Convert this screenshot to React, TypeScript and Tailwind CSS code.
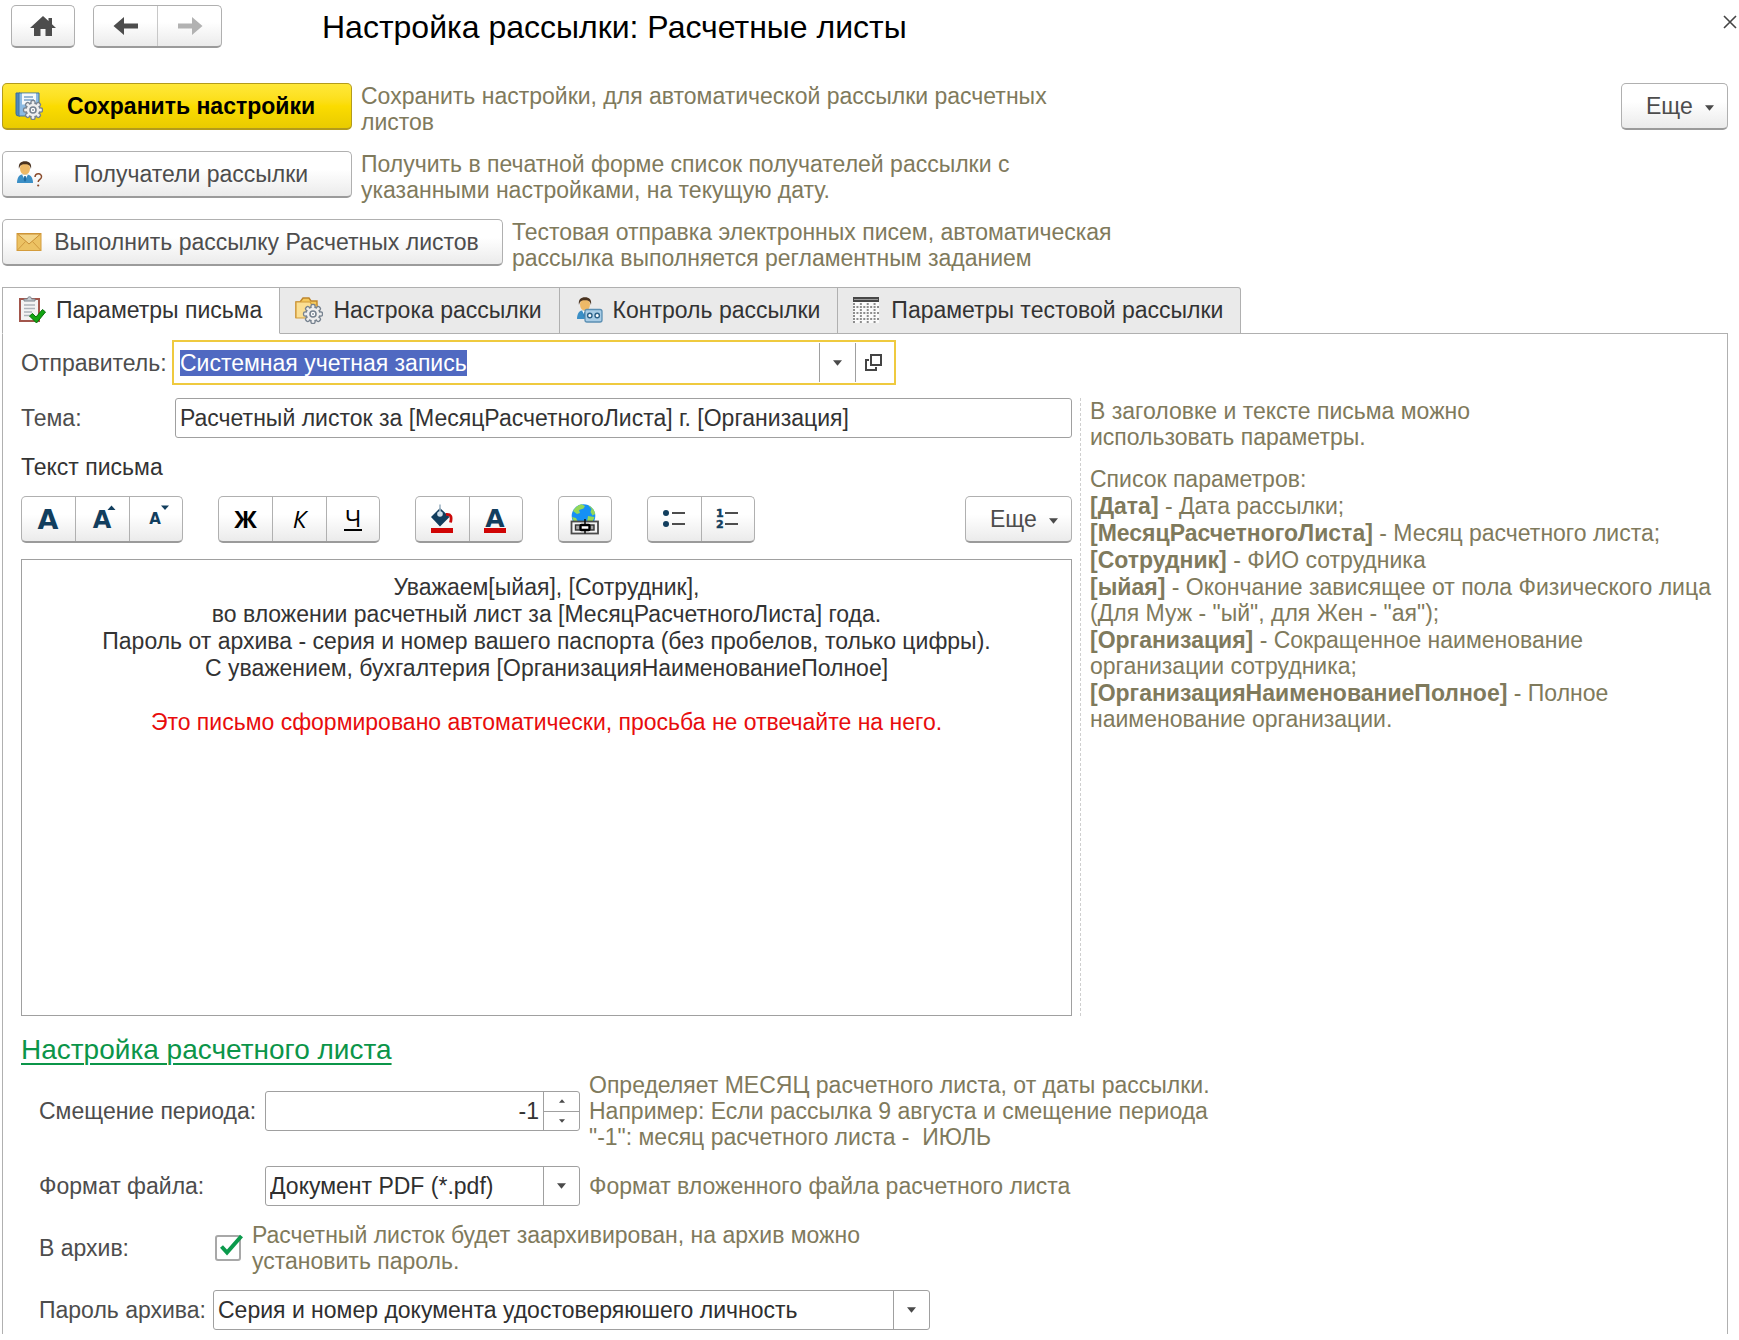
import { useEffect, useRef, useState, type ReactNode } from 'react';

const BTN = 'border border-[#b0b0b0] border-b-2 border-b-[#9b9b9b] bg-linear-to-b from-white from-40% to-[#ebebeb]';
const HINT = 'leading-[26px] text-[#7f7a5c] whitespace-nowrap';
const LABEL = 'shrink-0 text-[#4d4d4d] leading-[26px] whitespace-nowrap';
const FIELD = 'flex h-10 items-stretch rounded-[3px] border border-[#a0a0a0] bg-white';

const TEETH = [0, 45, 90, 135, 180, 225, 270, 315];

function Gear({ cx, cy }: { cx: number; cy: number }) {
  return (
    <g transform={`translate(${cx} ${cy})`}>
      <g fill="#eeeeee" stroke="#76828f" strokeWidth="1.5">
        {TEETH.map((a) => (
          <rect key={a} x="-2" y="-9.4" width="4" height="5" rx="1.6" transform={`rotate(${a})`} />
        ))}
        <circle r="7" />
      </g>
      {TEETH.map((a) => (
        <rect key={a} x="-1.3" y="-8.4" width="2.6" height="4" fill="#eeeeee" transform={`rotate(${a})`} />
      ))}
      <circle r="3" fill="#fff" stroke="#76828f" strokeWidth="1.6" />
      <circle r="1" fill="#8e99a5" />
    </g>
  );
}

function SaveIcon() {
  return (
    <svg width="28" height="28" viewBox="0 0 28 28" aria-hidden="true">
      <path d="M1 1h4v23H3.5A2.500 2.500 0 0 1 1 21.500z" fill="#4f88bd" stroke="#3a6c9c" />
      <path d="M4 1h20v23H4z" fill="#8cbbe2" stroke="#43759f" />
      <path d="M7 1.500h14v11H7z" fill="#f4f8fb" />
      <path d="M9 5h9M9 8h10" stroke="#7aa3c8" strokeWidth="1.400" />
      <Gear cx={18} cy={18} />
    </svg>
  );
}

function Person() {
  return (
    <>
      <path d="M1 22c0-5 2-8 5-8.500h5c4 .5 6 3.500 6 8.500z" fill="#3b8fc6" />
      <path d="M6 13.500l3 5.500 3-5.500z" fill="#fff" />
      <path d="M8.300 15h1.400l.6 4-1.300 2-1.300-2z" fill="#1f6a9f" />
      <ellipse cx="9" cy="7.500" rx="5" ry="6.200" fill="#edb967" />
      <path d="M3 8C2 2.500 5 .3 9 .3s7 2.200 6 7.700c-.7-3-1.500-4.800-6-4.800S3.700 5 3 8z" fill="#4a3320" />
    </>
  );
}

function RecipientsIcon() {
  return (
    <svg width="28" height="28" viewBox="0 0 28 28" aria-hidden="true">
      <g transform="translate(1 1)">
        <Person />
      </g>
      <path d="M20 17c.3-4.500 7-4 6.500 0-.2 2.400-3.300 2.500-3.300 5" fill="none" stroke="#8a4b2c" strokeWidth="1.500" />
      <circle cx="23.200" cy="25.500" r="1.100" fill="#8a4b2c" />
    </svg>
  );
}

function MailIcon() {
  return (
    <svg width="28" height="20" viewBox="0 0 28 20" aria-hidden="true">
      <rect x="2" y="1.500" width="24" height="17" fill="#ecc263" stroke="#d49c3c" />
      <path d="M2.500 2l11.500 10L25.500 2z" fill="#f3d58a" stroke="#c98f35" />
      <path d="M2.500 18l8-8.500M25.500 18l-8-8.500" stroke="#d09a40" />
    </svg>
  );
}

function ClipboardIcon() {
  return (
    <svg width="28" height="28" viewBox="0 0 28 28" aria-hidden="true">
      <rect x="2" y="3" width="19" height="22" fill="#f3f3f3" stroke="#a2564c" strokeWidth="2" />
      <path d="M6 5V3h3.500C9.500 1.500 10.500.8 11.500.8s2 .7 2 2.200H17v2z" fill="#c6ccd2" stroke="#7c858d" />
      <path d="M6 9h11M6 12.500h11M6 16h8M6 19.500h6" stroke="#aeb4ba" strokeWidth="1.400" />
      <path d="M11.500 20l3-2.500 3.500 3.500 6.500-7.500 3 2.500-9 11z" fill="#12a512" stroke="#0a6d0d" />
    </svg>
  );
}

function FolderIcon() {
  return (
    <svg width="28" height="28" viewBox="0 0 28 28" aria-hidden="true">
      <path d="M1 22V6h4l3-4h6l2 3h6v8" fill="#f4c95d" stroke="#bf862c" strokeWidth="1.400" />
      <path d="M1 22V6h14l2 3h5v6l-10 7z" fill="#fbdf93" stroke="#d29c3a" strokeWidth="1.200" />
      <Gear cx={18} cy={18} />
    </svg>
  );
}

function ControlIcon() {
  return (
    <svg width="28" height="28" viewBox="0 0 28 28" aria-hidden="true">
      <g transform="translate(1 1)">
        <Person />
      </g>
      <rect x="10" y="13.500" width="17" height="12.500" rx="2" fill="#a9cde6" stroke="#5b8fb3" strokeWidth="1.300" />
      <circle cx="14.800" cy="19.500" r="2.200" fill="#fff" stroke="#2d6288" strokeWidth="1.400" />
      <circle cx="22.200" cy="19.500" r="2.200" fill="#fff" stroke="#2d6288" strokeWidth="1.400" />
    </svg>
  );
}

const GRID_ROWS = [8, 11, 14, 17, 20, 23, 26];

function GridIcon() {
  return (
    <svg width="28" height="28" viewBox="0 0 28 28" aria-hidden="true">
      <rect x="0" y="6" width="26" height="21" fill="#fafafa" />
      <rect x="0" y="1" width="26" height="5" fill="#474747" />
      <path d="M1 3.500h24" stroke="#9b9b9b" />
      {GRID_ROWS.map((y, i) => (
        <path
          key={y}
          d={`M0 ${y}h26`}
          stroke="#6a6a6a"
          strokeWidth="1.5"
          strokeDasharray={i % 2 ? '2 1.43' : '2 4.86'}
        />
      ))}
    </svg>
  );
}

function HomeIcon() {
  return (
    <svg width="26" height="22" viewBox="0 0 26 22" aria-hidden="true">
      <path d="M13 1L0 13h4v8h6.500v-7h5v7H22v-8h4l-4-3.800V3h-3.500v3z" fill="#4d4d4d" />
    </svg>
  );
}

function ArrowIcon({ right }: { right?: boolean }) {
  return (
    <svg width="26" height="18" viewBox="0 0 26 18" aria-hidden="true">
      {right ? (
        <path d="M25.500 9L15 0v6.600H1v4.800h14V18z" fill="#b2b2b2" />
      ) : (
        <path d="M.5 9L11 0v6.600h14v4.800H11V18z" fill="#4d4d4d" />
      )}
    </svg>
  );
}

function Caret({ up, small }: { up?: boolean; small?: boolean }) {
  return (
    <svg width={small ? 6 : 9} height={small ? 4 : 6} viewBox="0 0 10 6" aria-hidden="true">
      <path d={up ? 'M0 6h10L5 0z' : 'M0 0h10L5 6z'} fill="#4a4a4a" />
    </svg>
  );
}

function Letter({ size, y, children }: { size: number; y: number; children: ReactNode }) {
  return (
    <text x="14" y={y} fontSize={size} fontWeight="bold" textAnchor="middle" fill="#123e5e" fontFamily="DejaVu Sans, sans-serif">
      {children}
    </text>
  );
}

function Glyph({ children }: { children: ReactNode }) {
  return (
    <svg width="30" height="32" viewBox="0 0 30 32" className="overflow-visible">
      {children}
    </svg>
  );
}

function GlobeLink() {
  return (
    <Glyph>
      <circle cx="13.500" cy="13" r="11.800" fill="#1590f5" />
      <path
        d="M3 8c2-3.500 5-6 8.500-6.700L15 3l-1.500 2.500L9 7l1 3-3 1zM18 2c4 2 6.500 5 7.200 9l-2.700 1.500-2-3.500 1-3zM2 14l4 1 2 4H4zM18 13l6.500 1-2 5H17z"
        fill="#93d857"
      />
      <rect x="1.500" y="18.500" width="26.500" height="12" fill="#f4f4f4" stroke="#4b4b4b" strokeWidth="1.800" />
      <rect x="5.500" y="22" width="18.500" height="5" fill="#a5a5a5" stroke="#333" strokeWidth="1.400" />
      <rect x="10.500" y="22" width="9" height="5" rx="1" fill="#fff" stroke="#000" strokeWidth="2.400" />
      <path d="M15 16v5M15 28v2.500" stroke="#111" strokeWidth="1.600" />
    </Glyph>
  );
}

const TOOL_GROUPS: { label: string; icon: ReactNode }[][] = [
  [
    { label: 'Шрифт', icon: <Glyph><Letter size={27} y={26}>A</Letter></Glyph> },
    {
      label: 'Увеличить шрифт',
      icon: (
        <Glyph>
          <Letter size={24} y={25}>A</Letter>
          <path d="M19.500 7h8l-4-4.500z" fill="#123e5e" />
        </Glyph>
      ),
    },
    {
      label: 'Уменьшить шрифт',
      icon: (
        <Glyph>
          <Letter size={15} y={21}>A</Letter>
          <path d="M20 2.500h8L24 7z" fill="#123e5e" />
        </Glyph>
      ),
    },
  ],
  [
    { label: 'Полужирный', icon: <span className="font-['Open_Sans',sans-serif] text-2xl font-bold text-black">Ж</span> },
    { label: 'Курсив', icon: <span className="font-['Open_Sans',sans-serif] text-2xl italic text-black">К</span> },
    {
      label: 'Подчеркнутый',
      icon: <span className="border-b-2 border-black px-px font-['Open_Sans',sans-serif] text-2xl leading-[22px] text-black">Ч</span>,
    },
  ],
  [
    {
      label: 'Цвет фона',
      icon: (
        <Glyph>
          <path d="M12 5l9.500 9L12 23.500 3 14z" fill="#123e5e" />
          <path d="M12 1.500v8" stroke="#9fb4c4" strokeWidth="1.600" />
          <circle cx="12" cy="11" r="2.800" fill="#cfe0ec" />
          <path d="M18 11.500c5-.5 6 2 4.500 8" fill="none" stroke="#cc0a0a" strokeWidth="2.800" />
          <rect x="3" y="25" width="22" height="5" fill="#d00505" />
        </Glyph>
      ),
    },
    {
      label: 'Цвет текста',
      icon: (
        <Glyph>
          <Letter size={25} y={24}>A</Letter>
          <rect x="3" y="25" width="22" height="5" fill="#d00505" />
        </Glyph>
      ),
    },
  ],
  [{ label: 'Вставить ссылку', icon: <GlobeLink /> }],
  [
    {
      label: 'Маркированный список',
      icon: (
        <Glyph>
          <circle cx="6" cy="10" r="3" fill="#123e5e" />
          <circle cx="6" cy="21" r="3" fill="#123e5e" />
          <path d="M12 10h13M12 21h13" stroke="#4d4d4d" strokeWidth="2" />
        </Glyph>
      ),
    },
    {
      label: 'Нумерованный список',
      icon: (
        <Glyph>
          <g fill="#123e5e" stroke="#123e5e" strokeWidth="0.5" fontSize="11" fontWeight="bold" fontFamily="DejaVu Sans, sans-serif">
            <text x="3" y="14">1</text>
            <text x="3" y="25">2</text>
          </g>
          <path d="M12 10h13M12 21h13" stroke="#4d4d4d" strokeWidth="2" />
        </Glyph>
      ),
    },
  ],
];

const TABS = [
  { title: 'Параметры письма', icon: <ClipboardIcon /> },
  { title: 'Настрока рассылки', icon: <FolderIcon /> },
  { title: 'Контроль рассылки', icon: <ControlIcon /> },
  { title: 'Параметры тестовой рассылки', icon: <GridIcon /> },
];

function MoreButton() {
  return (
    <button className={`flex h-[47px] w-[107px] shrink-0 items-center gap-3 rounded-[5px] pl-6 text-[#4d4d4d] ${BTN}`}>
      Еще
      <span className="pt-1">
        <Caret />
      </span>
    </button>
  );
}

function ActionButton({ icon, width, primary, children }: { icon: ReactNode; width: string; primary?: boolean; children: ReactNode }) {
  const look = primary
    ? 'border border-b-2 border-[#b39b1c] bg-linear-to-b from-[#ffe838] via-[#fbdc00] to-[#e9cb00] font-bold text-black'
    : `text-[#4d4d4d] ${BTN}`;
  return (
    <button className={`flex h-[47px] shrink-0 items-center gap-2 rounded-[5px] pr-5 pl-3 whitespace-nowrap ${width} ${look}`}>
      {icon}
      <span className="flex-1 text-center">{children}</span>
    </button>
  );
}

function SelectField({ id, value, width }: { id: string; value: string; width: string }) {
  return (
    <div className={`relative ${FIELD} ${width}`}>
      <select id={id} className="w-full appearance-none bg-transparent pr-9 pl-1 text-[#2f2f2f] outline-none">
        <option>{value}</option>
      </select>
      <span className="pointer-events-none absolute inset-y-0 right-0 flex w-9 items-center justify-center border-l border-[#a0a0a0]">
        <Caret />
      </span>
    </div>
  );
}

export default function App() {
  const [tab, setTab] = useState(0);
  const [offset, setOffset] = useState(-1);
  const [archive, setArchive] = useState(true);
  const senderRef = useRef<HTMLInputElement>(null);

  useEffect(() => {
    senderRef.current?.focus();
    senderRef.current?.select();
  }, []);

  return (
    <div className="min-h-screen bg-white pb-2 font-['Liberation_Sans',Arial,sans-serif] text-[23px] leading-[26px] text-[#333]">
      <header className="flex items-start pt-[5px] pb-[33px] pl-[11px]">
        <button aria-label="Домой" className={`flex h-[43px] w-16 items-center justify-center rounded-[5px] ${BTN}`}>
          <HomeIcon />
        </button>
        <div className={`ml-[18px] flex h-[43px] w-[129px] rounded-[5px] ${BTN}`}>
          <button aria-label="Назад" className="flex flex-1 items-center justify-center border-r border-[#c8c8c8]">
            <ArrowIcon />
          </button>
          <button aria-label="Вперед" className="flex flex-1 items-center justify-center">
            <ArrowIcon right />
          </button>
        </div>
        <h1 className="ml-[100px] flex-1 text-[32px] leading-[45px] text-black">Настройка рассылки: Расчетные листы</h1>
        <button aria-label="Закрыть" className="mt-2 p-0.5">
          <svg width="14" height="14" viewBox="0 0 14 14" aria-hidden="true">
            <path d="M1 1l12 12M13 1L1 13" stroke="#444" strokeWidth="1.600" />
          </svg>
        </button>
      </header>

      <main className="pr-[11px] pl-0.5">
        <div className="flex flex-col gap-4">
          <div className="flex gap-[9px]">
            <ActionButton icon={<SaveIcon />} width="w-[350px]" primary>Сохранить настройки</ActionButton>
            <p className={`flex-1 ${HINT}`}>
              Сохранить настройки, для автоматической рассылки расчетных
              <br />
              листов
            </p>
            <MoreButton />
          </div>
          <div className="flex gap-[9px]">
            <ActionButton icon={<RecipientsIcon />} width="w-[350px]">Получатели рассылки</ActionButton>
            <p className={HINT}>
              Получить в печатной форме список получателей рассылки с
              <br />
              указанными настройками, на текущую дату.
            </p>
          </div>
          <div className="flex gap-[9px]">
            <ActionButton icon={<MailIcon />} width="w-[501px]">Выполнить рассылку Расчетных листов</ActionButton>
            <p className={HINT}>
              Тестовая отправка электронных писем, автоматическая
              <br />
              рассылка выполняется регламентным заданием
            </p>
          </div>
        </div>

        <div role="tablist" className="relative z-10 mt-4 -mb-px flex">
          {TABS.map((t, i) => (
            <button
              key={t.title}
              role="tab"
              aria-selected={tab === i}
              onClick={() => setTab(i)}
              className={`flex h-[47px] items-center gap-2.5 border-t border-r border-b border-[#b0b0b0] pr-[17px] pb-0.5 pl-[15px] whitespace-nowrap first:border-l last:rounded-tr-[3px] ${
                tab === i ? 'border-b-white bg-white' : 'bg-[#eaeaea]'
              }`}
            >
              {t.icon}
              {t.title}
            </button>
          ))}
        </div>

        <section className="border-x border-t border-[#b0b0b0] pt-[9px] pr-2 pb-1 pl-[18px]">
          <div className="flex items-center">
            <label htmlFor="sender" className={`w-[154px] ${LABEL}`}>Отправитель:</label>
            <div className="flex h-[39px] w-[718px] outline-2 outline-offset-1 outline-[#efca3f]">
              <div className="flex flex-1 items-center">
                <input
                  id="sender"
                  ref={senderRef}
                  defaultValue="Системная учетная запись"
                  className="w-full px-[5px] leading-[26px] outline-none selection:bg-[#5069c1] selection:text-white"
                />
              </div>
              <button aria-label="Выбрать из списка" className="flex w-9 items-center justify-center border-l border-[#a0a0a0]">
                <Caret />
              </button>
              <button aria-label="Открыть" className="flex w-[38px] items-center justify-center border-l border-[#a0a0a0] pr-0.5">
                <svg width="17" height="17" viewBox="0 0 17 17" fill="none" stroke="#444" strokeWidth="2" aria-hidden="true">
                  <path d="M6 1h10v10H6z" />
                  <path d="M4 6H1v10h10v-3" />
                </svg>
              </button>
            </div>
          </div>

          <div className="mt-4 grid grid-cols-[1051fr_639fr] gap-2">
            <div className="flex min-w-0 flex-col gap-4">
              <div className="flex items-center">
                <label htmlFor="subject" className={`w-[154px] ${LABEL}`}>Тема:</label>
                <div className={`flex-1 ${FIELD}`}>
                  <input
                    id="subject"
                    defaultValue="Расчетный листок за [МесяцРасчетногоЛиста] г. [Организация]"
                    className="w-full px-1 outline-none"
                  />
                </div>
              </div>
              <div>Текст письма</div>
              <div className="flex items-center gap-[35px]">
                {TOOL_GROUPS.map((group) => (
                  <div key={group[0].label} className={`flex h-[47px] divide-x divide-[#b0b0b0] rounded-[5px] ${BTN}`}>
                    {group.map((tool) => (
                      <button key={tool.label} aria-label={tool.label} className="flex w-[54px] items-center justify-center last:w-[52px]">
                        {tool.icon}
                      </button>
                    ))}
                  </div>
                ))}
                <div className="ml-auto">
                  <MoreButton />
                </div>
              </div>
              <div
                role="textbox"
                aria-label="Текст письма"
                contentEditable
                suppressContentEditableWarning
                className="min-h-[457px] border border-[#a0a0a0] pt-3.5 text-center leading-[27px] outline-none"
              >
                <p>Уважаем[ыйая], [Сотрудник],</p>
                <p>во вложении расчетный лист за [МесяцРасчетногоЛиста] года.</p>
                <p>Пароль от архива - серия и номер вашего паспорта (без пробелов, только цифры).</p>
                <p>С уважением, бухгалтерия [ОрганизацияНаименованиеПолное]</p>
                <p><br /></p>
                <p className="text-[#e80c0c]">Это письмо сформировано автоматически, просьба не отвечайте на него.</p>
              </div>
            </div>

            <aside className={`border-l border-dashed border-[#cfcfcf] pl-[9px] ${HINT}`}>
              <p>
                В заголовке и тексте письма можно
                <br />
                использовать параметры.
              </p>
              <div className="mt-4 flex flex-col gap-px">
                <p>Список параметров:</p>
                <p><b>[Дата]</b> - Дата рассылки;</p>
                <p><b>[МесяцРасчетногоЛиста]</b> - Месяц расчетного листа;</p>
                <p><b>[Сотрудник]</b> - ФИО сотрудника</p>
                <p>
                  <b>[ыйая]</b> - Окончание зависящее от пола Физического лица
                  <br />
                  (Для Муж - "ый", для Жен - "ая");
                </p>
                <p>
                  <b>[Организация]</b> - Сокращенное наименование
                  <br />
                  организации сотрудника;
                </p>
                <p>
                  <b>[ОрганизацияНаименованиеПолное]</b> - Полное
                  <br />
                  наименование организации.
                </p>
              </div>
            </aside>
          </div>

          <h2 className="mt-[18px] mb-1.5 text-[28px] leading-8">
            <a href="#payslip" className="text-[#0b9549] underline decoration-2 underline-offset-4">Настройка расчетного листа</a>
          </h2>

          <div id="payslip" className="flex flex-col gap-4 pl-[18px]">
            <div className="flex items-center">
              <label htmlFor="offset" className={`w-[226px] ${LABEL}`}>Смещение периода:</label>
              <div className={`w-[315px] ${FIELD}`}>
                <input
                  id="offset"
                  value={offset}
                  onChange={(e) => setOffset(Number(e.target.value) || 0)}
                  className="min-w-0 flex-1 px-1 text-right outline-none"
                />
                <div className="flex w-9 flex-col divide-y divide-[#a0a0a0] border-l border-[#a0a0a0]">
                  <button aria-label="Больше" onClick={() => setOffset(offset + 1)} className="flex flex-1 items-center justify-center">
                    <Caret up small />
                  </button>
                  <button aria-label="Меньше" onClick={() => setOffset(offset - 1)} className="flex flex-1 items-center justify-center">
                    <Caret small />
                  </button>
                </div>
              </div>
              <p className={`ml-[9px] ${HINT}`}>
                Определяет МЕСЯЦ расчетного листа, от даты рассылки.
                <br />
                Например: Если рассылка 9 августа и смещение периода
                <br />
                "-1": месяц расчетного листа -&nbsp; ИЮЛЬ
              </p>
            </div>

            <div className="flex items-center">
              <label htmlFor="format" className={`w-[226px] ${LABEL}`}>Формат файла:</label>
              <SelectField id="format" value="Документ PDF (*.pdf)" width="w-[315px]" />
              <p className={`ml-[9px] ${HINT}`}>Формат вложенного файла расчетного листа</p>
            </div>

            <div className="flex items-center">
              <label htmlFor="archive" className={`w-[174px] ${LABEL}`}>В архив:</label>
              <div className="relative ml-0.5 size-[26px]">
                <input
                  id="archive"
                  type="checkbox"
                  checked={archive}
                  onChange={(e) => setArchive(e.target.checked)}
                  className="block size-[26px] appearance-none rounded-[3px] border-2 border-[#a8a8a8] bg-white"
                />
                {archive && (
                  <svg width="30" height="28" viewBox="0 0 30 28" className="pointer-events-none absolute -top-0.5 left-0" aria-hidden="true">
                    <path d="M6.500 13.500l5.500 6L26.500 3" fill="none" stroke="#0b9a4c" strokeWidth="4" />
                  </svg>
                )}
              </div>
              <p className={`ml-[11px] ${HINT}`}>
                Расчетный листок будет заархивирован, на архив можно
                <br />
                установить пароль.
              </p>
            </div>

            <div className="flex items-center">
              <label htmlFor="password" className={`w-[174px] ${LABEL}`}>Пароль архива:</label>
              <SelectField id="password" value="Серия и номер документа удостоверяюшего личность" width="w-[717px]" />
            </div>
          </div>
        </section>
      </main>
    </div>
  );
}
